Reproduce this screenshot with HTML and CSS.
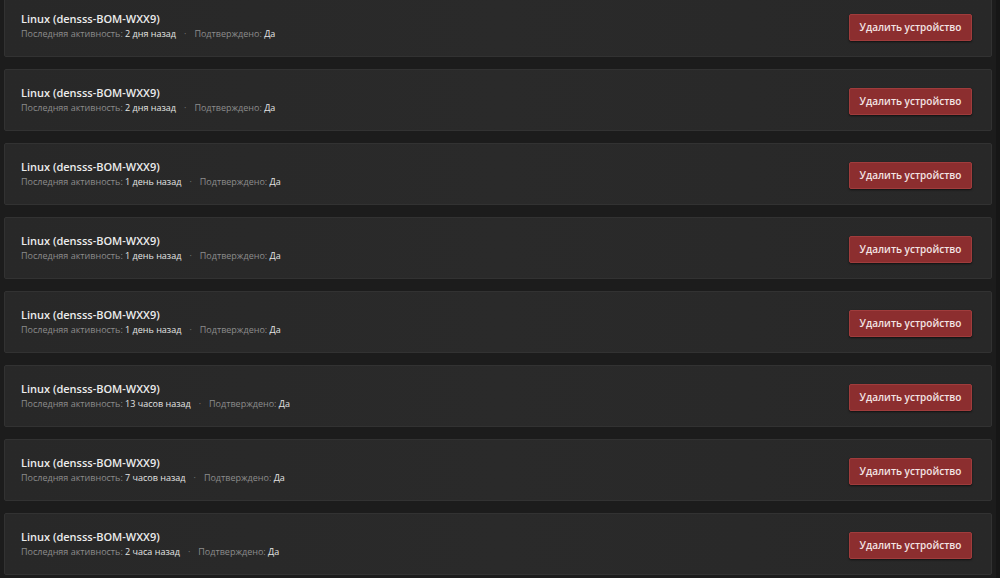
FILE: index.html
```html
<!DOCTYPE html>
<html lang="ru">
<head>
<meta charset="utf-8">
<link rel="stylesheet" href="styles.css">
</head>
<body>
<div class="page">
  <div class="list">
    <div class="card"><div class="info"><div class="title">Linux (densss-BOM-WXX9)</div><div class="meta"><span class="lbl">Последняя активность:</span> <span class="val">2 дня назад</span><span class="sep">·</span><span class="lbl">Подтверждено:</span> <span class="val">Да</span></div></div><button class="btn">Удалить устройство</button></div>
    <div class="card"><div class="info"><div class="title">Linux (densss-BOM-WXX9)</div><div class="meta"><span class="lbl">Последняя активность:</span> <span class="val">2 дня назад</span><span class="sep">·</span><span class="lbl">Подтверждено:</span> <span class="val">Да</span></div></div><button class="btn">Удалить устройство</button></div>
    <div class="card"><div class="info"><div class="title">Linux (densss-BOM-WXX9)</div><div class="meta"><span class="lbl">Последняя активность:</span> <span class="val">1 день назад</span><span class="sep">·</span><span class="lbl">Подтверждено:</span> <span class="val">Да</span></div></div><button class="btn">Удалить устройство</button></div>
    <div class="card"><div class="info"><div class="title">Linux (densss-BOM-WXX9)</div><div class="meta"><span class="lbl">Последняя активность:</span> <span class="val">1 день назад</span><span class="sep">·</span><span class="lbl">Подтверждено:</span> <span class="val">Да</span></div></div><button class="btn">Удалить устройство</button></div>
    <div class="card"><div class="info"><div class="title">Linux (densss-BOM-WXX9)</div><div class="meta"><span class="lbl">Последняя активность:</span> <span class="val">1 день назад</span><span class="sep">·</span><span class="lbl">Подтверждено:</span> <span class="val">Да</span></div></div><button class="btn">Удалить устройство</button></div>
    <div class="card"><div class="info"><div class="title">Linux (densss-BOM-WXX9)</div><div class="meta"><span class="lbl">Последняя активность:</span> <span class="val">13 часов назад</span><span class="sep">·</span><span class="lbl">Подтверждено:</span> <span class="val">Да</span></div></div><button class="btn">Удалить устройство</button></div>
    <div class="card"><div class="info"><div class="title">Linux (densss-BOM-WXX9)</div><div class="meta"><span class="lbl">Последняя активность:</span> <span class="val">7 часов назад</span><span class="sep">·</span><span class="lbl">Подтверждено:</span> <span class="val">Да</span></div></div><button class="btn">Удалить устройство</button></div>
    <div class="card"><div class="info"><div class="title">Linux (densss-BOM-WXX9)</div><div class="meta"><span class="lbl">Последняя активность:</span> <span class="val">2 часа назад</span><span class="sep">·</span><span class="lbl">Подтверждено:</span> <span class="val">Да</span></div></div><button class="btn">Удалить устройство</button></div>
  </div>
</div>
</body>
</html>
```
FILE: styles.css
```css
html, body {
  margin: 0;
  padding: 0;
  background: #161616;
  overflow: hidden;
}
.page {
  width: 996px;
  height: 578px;
  background: #1c1c1c;
  font-family: "Open Sans", "Noto Sans", sans-serif;
  overflow: hidden;
}
.list {
  display: flex;
  flex-direction: column;
  gap: 12px;
  padding: 0 4px;
  margin-top: -5px;
}
.card {
  height: 60px;
  display: flex;
  align-items: center;
  justify-content: space-between;
  padding: 0 19px 0 16px;
  background: linear-gradient(90deg, #282828 0%, #2a2a2a 50%, #282828 100%);
  border: 1px solid #323232;
  border-radius: 2px;
}
.info {
  display: flex;
  flex-direction: column;
  gap: 0;
}
.title {
  color: #ececec;
  font-size: 11px;
  font-weight: 600;
  line-height: 16px;
}
.meta {
  font-size: 9px;
  line-height: 14px;
  color: #8c8c8c;
}
.val {
  color: #e4e4e4;
  font-weight: 500;
}
.sep {
  color: #777;
  margin: 0 8px 0 8px;
}
.btn {
  width: 123px;
  height: 27px;
  margin-top: 2px;
  padding: 0;
  background: #8c2e2f;
  border: 1px solid #a03c3c;
  border-radius: 2px;
  box-shadow: 0 1px 2px rgba(0,0,0,0.6);
  color: #f3e4e4;
  font-family: "Open Sans", "Noto Sans", sans-serif;
  font-size: 10px;
  font-weight: 600;
}
```
